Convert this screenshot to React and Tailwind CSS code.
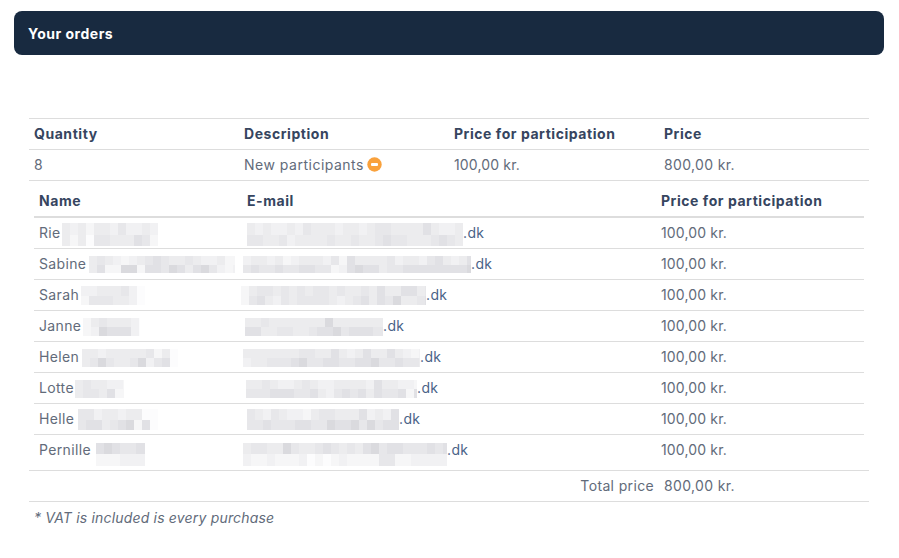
const FONT = "font-['Inter','Liberation_Sans',sans-serif]";

const shades = ['#fcfcfd', '#f6f6f7', '#f1f1f3', '#ececee', '#e7e7ea', '#e1e1e5', '#dadade'];

// two rows of pixelated blur per censored value, one digit per 8px cell
function Mosaic({ w, h, y = 0, x = 0, rows }) {
  return (
    <div
      className="flex shrink-0 flex-col overflow-hidden"
      style={{ width: w, height: h, marginTop: y, marginLeft: x }}
    >
      {rows.map((row, i) => (
        <div key={i} className="flex flex-1">
          {row.split('').map((s, j) => (
            <div key={j} className="h-full w-[8px] shrink-0" style={{ background: shades[s] }} />
          ))}
        </div>
      ))}
    </div>
  );
}

const people = [
  {
    name: 'Rie', gap: 1, nm: { w: 96, h: 23, y: 2, rows: ['323133242232', '313044333541'] },
    em: { x: 6, w: 216, h: 23, y: 2, rows: ['323223243332332344333353223', '443342333343343345443334543'] },
  },
  {
    name: 'Sabine', gap: 3, nm: { w: 146, h: 17, rows: ['3432123454334322311', '3511661554653564212'] },
    em: { x: 2, w: 228, h: 17, rows: ['23323123332415333342332453235', '45445445544125655344555555556'] },
  },
  {
    name: 'Sarah', gap: 2, nm: { w: 64, h: 19, rows: ['22333420', '14443320'] },
    em: { x: 0, w: 185, h: 19, rows: ['134434343443433435335534', '145324344443234535463345'] },
  },
  {
    name: 'Janne', gap: 2, nm: { w: 57, h: 18, rows: ['13433320', '12655520'] },
    em: { x: 4, w: 138, h: 18, rows: ['334333333363333333', '553344334556455544'] },
  },
  {
    name: 'Helen', gap: 3, nm: { w: 96, h: 18, rows: ['332333334130', '346433462450'] },
    em: { x: 2, w: 177, h: 18, rows: ['33333334433532353353212', '23344456445544556445443'] },
  },
  {
    name: 'Lotte', gap: 1, nm: { w: 49, h: 18, rows: ['3433221', '3443511'] },
    em: { x: 5, w: 171, h: 18, rows: ['3343223432233332533221', '4445554453245453544515'] },
  },
  {
    name: 'Helle', gap: 4, nm: { w: 80, h: 21, rows: ['4423323300', '4553456150'] },
    em: { x: 6, w: 152, h: 21, rows: ['4324322134433352325', '4454445544655646455'] },
  },
  {
    name: 'Pernille', gap: 5, last: true, nm: { w: 49, h: 23, y: 7, rows: ['5654455', '1112222'] },
    em: { x: 2, w: 204, h: 23, y: 7, rows: ['34433643345434356455444545', '21121112010121111441122222'] },
  },
];

function Cell({ children, className = '' }) {
  return <div className={`flex min-h-[31px] items-center ${className}`}>{children}</div>;
}

export default function App() {
  return (
    <div className={`h-[558px] w-[899px] overflow-hidden bg-white pt-[11px] text-[14px] text-[#626b7a] ${FONT} tracking-[0.35px]`}>
      <div className="ml-[14px] flex h-[44px] w-[870px] items-center rounded-lg bg-[#182a40] px-[14px] font-bold tracking-[0.5px] text-white">
        Your orders
      </div>

      <div className="ml-[29px] mr-[30px] mt-[63px]">
        <div className="grid h-[32px] grid-cols-[210px_210px_210px_1fr] items-center border-y border-[#dddddd] pb-[2px] pl-[5px] font-bold tracking-[0.55px] text-[#364560]">
          <div>Quantity</div>
          <div>Description</div>
          <div>Price for participation</div>
          <div>Price</div>
        </div>
        <div className="grid h-[31px] grid-cols-[210px_210px_210px_1fr] items-center border-b border-[#dddddd] pb-[1px] pl-[5px]">
          <div>8</div>
          <div className="flex items-center gap-[3px]">
            <span className="tracking-[0.5px]">New participants</span>
            <svg width="15" height="15" viewBox="0 0 15 15" className="-mt-[1px]">
              <circle cx="7.5" cy="7.5" r="7.2" fill="#f9a13c" />
              <rect x="4" y="6" width="7" height="3" rx="1" fill="#ffffff" />
            </svg>
          </div>
          <div className="tracking-[0.15px]">100,00 kr.</div>
          <div>800,00 kr.</div>
        </div>

        <div className="ml-[5px] mr-[5px]">
          <div className="grid h-[37px] grid-cols-[202px_420px_1fr] items-center border-b-2 border-[#dddddd] px-[5px] pt-[4px] font-bold tracking-[0.55px] text-[#364560]">
            <div>Name</div>
            <div className="ml-[6px]">E-mail</div>
            <div>Price for participation</div>
          </div>
          {people.map((p) => (
            <div
              key={p.name}
              className={`grid grid-cols-[202px_420px_1fr] items-start px-[5px] ${p.last ? 'h-[35px]' : 'h-[31px] border-b border-[#dddddd]'}`}
            >
              <Cell>
                <span className="mb-[2px]">{p.name}</span>
                <span style={{ width: p.gap }} />
                <Mosaic {...p.nm} />
              </Cell>
              <Cell className="text-[#4a6388]">
                <Mosaic {...p.em} />
                <span className="mb-[2px]">.dk</span>
              </Cell>
              <Cell>
                <span className="mb-[2px] tracking-[0.15px]">100,00 kr.</span>
              </Cell>
            </div>
          ))}
        </div>

        <div className="flex h-[32px] items-center justify-end border-y border-[#dddddd] pb-[2px]">
          <span className="mr-[10px]">Total price</span>
          <span className="w-[205px]">800,00 kr.</span>
        </div>
        <div className="mt-[5px] pl-[5px] italic tracking-[0.18px]">* VAT is included is every purchase</div>
      </div>
    </div>
  );
}
